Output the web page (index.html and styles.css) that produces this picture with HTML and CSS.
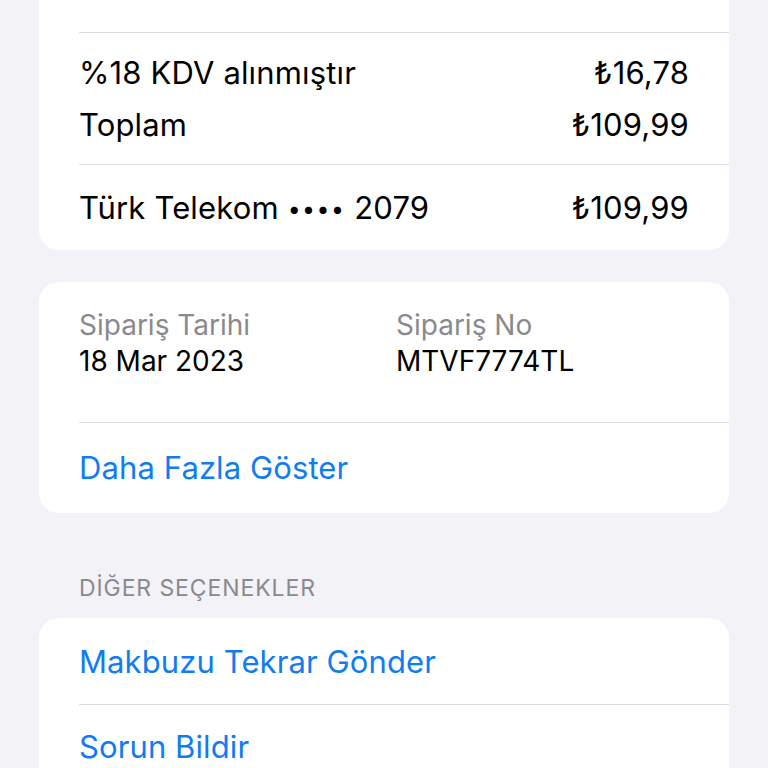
FILE: index.html
```html
<!DOCTYPE html>
<html lang="tr">
<head>
<meta charset="utf-8">
<link rel="stylesheet" href="styles.css">
</head>
<body>
<main class="page">
  <section class="card card-top">
    <div class="spacer"></div>
    <div class="group totals">
      <div class="line"><span>%18 KDV alınmıştır</span><span>₺16,78</span></div>
      <div class="line"><span>Toplam</span><span>₺109,99</span></div>
    </div>
    <div class="group payment">
      <div class="line"><span>Türk Telekom <span class="dots">••••</span> 2079</span><span>₺109,99</span></div>
    </div>
  </section>

  <section class="card card-order">
    <div class="group info">
      <div class="info-col">
        <div class="label">Sipariş Tarihi</div>
        <div class="value">18 Mar 2023</div>
      </div>
      <div class="info-col">
        <div class="label">Sipariş No</div>
        <div class="value">MTVF7774TL</div>
      </div>
    </div>
    <div class="group link-row more">
      <a class="link">Daha Fazla Göster</a>
    </div>
  </section>

  <h2 class="section-header">DİĞER SEÇENEKLER</h2>

  <section class="card card-options">
    <div class="group link-row resend">
      <a class="link">Makbuzu Tekrar Gönder</a>
    </div>
    <div class="group link-row report">
      <a class="link">Sorun Bildir</a>
    </div>
  </section>
</main>
</body>
</html>
```

FILE: styles.css
```css
* { box-sizing: border-box; margin: 0; padding: 0; }

html, body {
  background: #f2f2f7;
  height: 100%;
  overflow: hidden;
}

body {
  font-family: Inter, "Noto Sans", sans-serif;
  color: #000;
  -webkit-font-smoothing: antialiased;
}

.page {
  padding: 0 39px;
  display: flex;
  flex-direction: column;
}

.card {
  background: #fff;
  border-radius: 20px;
  display: flex;
  flex-direction: column;
}

.card-top {
  margin-top: -20px;
}

.spacer {
  height: 52px;
}

.group {
  margin-left: 40px;
  padding-right: 40px;
  border-top: 1px solid #dedee2;
}

.card-order .group:first-child,
.card-options .group:first-child {
  border-top: none;
}

.line {
  display: flex;
  justify-content: space-between;
  font-size: 31px;
  line-height: 52px;
  letter-spacing: 0.15px;
}

.dots {
  font-size: 23px;
  line-height: 0;
  letter-spacing: 1.5px;
  vertical-align: 2px;
}

.totals {
  padding: 14px 40px 13px 0;
}

.payment {
  padding: 17px 40px 16px 0;
}

.card-order {
  margin-top: 32px;
}

.info {
  display: grid;
  grid-template-columns: 317px 1fr;
  padding: 25px 40px 43px 0;
}

.label {
  font-size: 28px;
  line-height: 36px;
  color: #8a8a8e;
}

.value {
  font-size: 28px;
  line-height: 36px;
}

.link-row {
  font-size: 31px;
  line-height: 52px;
  letter-spacing: 0.1px;
}

.link {
  color: #117cf2;
  text-decoration: none;
}

.more {
  padding: 19px 40px 19px 0;
}

.section-header {
  font-size: 23px;
  font-weight: 400;
  line-height: 30px;
  color: #8a8a8e;
  padding: 60px 40px 15px;
  letter-spacing: 0.9px;
}

.resend {
  padding: 18px 40px 16px 0;
}

.report {
  padding: 16px 40px 16px 0;
}
```
